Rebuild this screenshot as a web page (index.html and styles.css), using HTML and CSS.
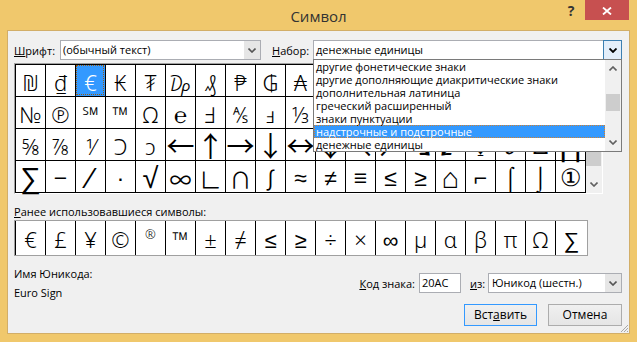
FILE: index.html
```html
<!DOCTYPE html>
<html lang="ru">
<head>
<meta charset="utf-8">
<title>Символ</title>
<link rel="stylesheet" href="styles.css">
</head>
<body>
<div class="window">
  <div class="titlebar">
    <div class="tb-spacer"></div>
    <div class="title">Символ</div>
    <div class="controls">
      <span class="help">?</span>
      <span class="close"><svg width="10" height="8" viewBox="0 0 10 8"><path d="M1 0.5 L9 7.5 M9 0.5 L1 7.5" stroke="#fff" stroke-width="1.8" fill="none"/></svg></span>
    </div>
  </div>
  <div class="client">
    <div class="font-row">
      <span class="lbl lbl-font"><u>Ш</u>рифт:</span>
      <div class="combo combo-font">
        <span class="value">(обычный текст)</span>
        <span class="btn"><svg width="8" height="5" viewBox="0 0 8 5"><path d="M0.5 0.5 L4 4 L7.5 0.5" stroke="#555" stroke-width="1.6" fill="none"/></svg></span>
      </div>
      <span class="lbl lbl-set"><u>Н</u>абор:</span>
      <div class="combo combo-set">
        <span class="value">денежные единицы</span>
        <span class="btn btn-active"><svg width="8" height="5" viewBox="0 0 8 5"><path d="M0.5 0.5 L4 4 L7.5 0.5" stroke="#000" stroke-width="1.8" fill="none"/></svg></span>
        <div class="droplist">
          <ul class="items">
            <li>другие фонетические знаки</li>
            <li>другие дополняющие диакритические знаки</li>
            <li>дополнительная латиница</li>
            <li>греческий расширенный</li>
            <li>знаки пунктуации</li>
            <li class="sel">надстрочные и подстрочные</li>
            <li>денежные единицы</li>
          </ul>
          <div class="vscroll list-scroll">
            <span class="sb-btn"><svg width="8" height="5" viewBox="0 0 8 5"><path d="M0.5 4.5 L4 1 L7.5 4.5" stroke="#606060" stroke-width="1.6" fill="none"/></svg></span>
            <div class="track"><div class="thumb thumb-list"></div></div>
            <span class="sb-btn"><svg width="8" height="5" viewBox="0 0 8 5"><path d="M0.5 0.5 L4 4 L7.5 0.5" stroke="#606060" stroke-width="1.6" fill="none"/></svg></span>
          </div>
        </div>
      </div>
    </div>

    <div class="grid-wrap">
      <div class="cells">
        <span class="cell">₪</span><span class="cell">₫</span><span class="cell sel">€</span><span class="cell">₭</span><span class="cell">₮</span><span class="cell">₯</span><span class="cell">₰</span><span class="cell">₱</span><span class="cell">₲</span><span class="cell">₳</span><span class="cell"></span><span class="cell"></span><span class="cell"></span><span class="cell"></span><span class="cell"></span><span class="cell"></span><span class="cell"></span><span class="cell"></span><span class="cell"></span>
        <span class="cell">№</span><span class="cell">℗</span><span class="cell">℠</span><span class="cell">™</span><span class="cell">Ω</span><span class="cell">℮</span><span class="cell">Ⅎ</span><span class="cell">⅍</span><span class="cell">ⅎ</span><span class="cell">⅓</span><span class="cell"></span><span class="cell"></span><span class="cell"></span><span class="cell"></span><span class="cell"></span><span class="cell"></span><span class="cell"></span><span class="cell"></span><span class="cell"></span>
        <span class="cell">⅝</span><span class="cell">⅞</span><span class="cell">⅟</span><span class="cell">Ↄ</span><span class="cell">ↄ</span><span class="cell arr">←</span><span class="cell arr">↑</span><span class="cell arr">→</span><span class="cell arr">↓</span><span class="cell arr">↔</span><span class="cell arr">↕</span><span class="cell arr">↖</span><span class="cell arr">↗</span><span class="cell arr">↘</span><span class="cell arr">↙</span><span class="cell wgl">↨</span><span class="cell wgl">∂</span><span class="cell wgl">∆</span><span class="cell lg">∏</span>
        <span class="cell lg">∑</span><span class="cell wgl">−</span><span class="cell lg">∕</span><span class="cell wgl">∙</span><span class="cell lg">√</span><span class="cell cjk">∞</span><span class="cell cjk">∟</span><span class="cell cjk">∩</span><span class="cell cjk">∫</span><span class="cell wgl">≈</span><span class="cell wgl">≠</span><span class="cell wgl">≡</span><span class="cell wgl">≤</span><span class="cell wgl">≥</span><span class="cell lg">⌂</span><span class="cell wgl">⌐</span><span class="cell wgl">⌠</span><span class="cell wgl">⌡</span><span class="cell big">①</span>
      </div>
      <div class="vscroll grid-scroll">
        <span class="sb-btn"><svg width="8" height="5" viewBox="0 0 8 5"><path d="M0.5 4.5 L4 1 L7.5 4.5" stroke="#606060" stroke-width="1.6" fill="none"/></svg></span>
        <div class="track"><div class="thumb thumb-grid"></div></div>
        <span class="sb-btn"><svg width="8" height="5" viewBox="0 0 8 5"><path d="M0.5 0.5 L4 4 L7.5 0.5" stroke="#606060" stroke-width="1.6" fill="none"/></svg></span>
      </div>
    </div>

    <div class="recent-label"><u>Р</u>анее использовавшиеся символы:</div>
    <div class="recent">
      <span class="rcell">€</span><span class="rcell">£</span><span class="rcell">¥</span><span class="rcell">©</span><span class="rcell sup">®</span><span class="rcell">™</span><span class="rcell">±</span><span class="rcell">≠</span><span class="rcell">≤</span><span class="rcell">≥</span><span class="rcell">÷</span><span class="rcell">×</span><span class="rcell">∞</span><span class="rcell">µ</span><span class="rcell">α</span><span class="rcell">β</span><span class="rcell">π</span><span class="rcell">Ω</span><span class="rcell">∑</span>
    </div>

    <div class="bottom">
      <div class="names">
        <div class="uname-lbl">Имя Юникода:</div>
        <div class="uname">Euro Sign</div>
      </div>
      <div class="actions">
        <div class="code-row">
          <span class="lbl lbl-code"><u>К</u>од знака:</span>
          <span class="input">20AC</span>
          <span class="lbl lbl-from"><u>и</u>з:</span>
          <div class="combo combo-from">
            <span class="value">Юникод (шестн.)</span>
            <span class="btn"><svg width="8" height="5" viewBox="0 0 8 5"><path d="M0.5 0.5 L4 4 L7.5 0.5" stroke="#555" stroke-width="1.6" fill="none"/></svg></span>
          </div>
        </div>
        <div class="buttons">
          <span class="button default">Вст<u>а</u>вить</span>
          <span class="button">Отмена</span>
        </div>
      </div>
    </div>
    <svg class="grip" width="9" height="9" viewBox="0 0 9 9"><path d="M8 1 L1 8 M8 4 L4 8 M8 7 L7 8" stroke="#a8a8a8" stroke-width="1" fill="none"/></svg>
  </div>
</div>
</body>
</html>
```

FILE: styles.css
```css
html, body {
  margin: 0;
  padding: 0;
}
body {
  width: 637px;
  height: 342px;
  overflow: hidden;
  font-family: "Segoe UI", "Open Sans", "Noto Sans", sans-serif;
  font-size: 11px;
  color: #000;
}
u { text-decoration: underline; text-underline-offset: 1px; }

.window {
  width: 637px;
  height: 342px;
  box-sizing: border-box;
  background: #f0c86c;
  padding: 0 7px 8px 7px;
  display: flex;
  flex-direction: column;
}

.titlebar {
  height: 30px;
  flex: none;
  display: grid;
  grid-template-columns: 1fr auto 1fr;
}
.title {
  font-size: 15px;
  line-height: 32px;
  color: #333;
}
.controls {
  justify-self: end;
  display: flex;
  align-items: flex-start;
  margin-right: 1px;
}
.help {
  width: 28px;
  height: 20px;
  text-align: center;
  font-weight: bold;
  font-size: 14px;
  line-height: 22px;
  color: #333;
}
.close {
  width: 44px;
  height: 20px;
  background: #c75050;
  display: flex;
  align-items: center;
  justify-content: center;
  padding-top: 2px;
  box-sizing: border-box;
}

.client {
  flex: 1;
  background: #f0f0f0;
  border: 1px solid #d2ae68;
  position: relative;
}

/* top row */
.font-row {
  display: flex;
  align-items: center;
  height: 20px;
  margin: 9px 0 0 6px;
}
.lbl-font { width: 46px; }
.lbl-set { width: 41px; margin-left: 11px; }

.combo {
  height: 20px;
  box-sizing: border-box;
  border: 1px solid #abadb3;
  background: #fff;
  display: flex;
  position: relative;
}
.combo .value {
  flex: 1;
  padding-left: 2px;
  line-height: 18px;
  white-space: nowrap;
}
.combo .btn {
  width: 16px;
  background: #e6e6e6;
  display: flex;
  align-items: center;
  justify-content: center;
}
.combo-font { width: 201px; }
.combo-set { width: 309px; }
.combo .btn-active {
  width: 17px;
  margin: -1px -1px -1px 0;
  border: 1px solid #3c7fb1;
  background: #e3eefa;
}

.droplist {
  position: absolute;
  top: 18px;
  left: -1px;
  right: -1px;
  height: 93px;
  box-sizing: border-box;
  border: 1px solid #7a7a7a;
  background: #fff;
  display: flex;
  z-index: 5;
}
.items {
  list-style: none;
  margin: 0;
  padding: 0;
  flex: 1;
}
.items li {
  height: 13px;
  line-height: 13px;
  padding-left: 2px;
  white-space: nowrap;
  box-sizing: border-box;
}
.items li.sel {
  background: #3399ff;
  color: #fff;
  outline: 1px dotted #d08030;
  outline-offset: -1px;
}

.vscroll {
  width: 16px;
  background: #f0f0f0;
  display: flex;
  flex-direction: column;
}
.sb-btn {
  height: 17px;
  display: flex;
  align-items: center;
  justify-content: center;
  flex: none;
}
.track { flex: 1; }
.thumb { background: #cdcdcd; margin: 0 1px; }
.thumb-list { margin-top: 17px; height: 17px; }
.thumb-grid { margin-top: 71px; height: 14px; margin-left: 0; }

/* symbol grid */
.grid-wrap {
  margin: 3px 0 0 6px;
  display: flex;
  width: max-content;
  border-style: solid;
  border-width: 1px;
  border-color: #a0a0a0 #ffffff #ffffff #a0a0a0;
}
.cells {
  display: grid;
  grid-template-columns: repeat(19, 30px);
  grid-auto-rows: 32px;
  border-right: 1px solid #000;
  border-bottom: 1px solid #000;
  background: #fff;
}
.cell {
  box-sizing: border-box;
  border-left: 1px solid #000;
  border-top: 1px solid #000;
  display: flex;
  align-items: center;
  justify-content: center;
  font-family: "Noto Sans", "DejaVu Sans", sans-serif;
  font-weight: 300;
  font-size: 22px;
  line-height: 24px;
  padding-top: 3px;
}
.cell.wgl {
  font-family: "Liberation Sans", "DejaVu Sans", sans-serif;
  font-size: 23px;
  font-weight: normal;
}
.cell.lg {
  font-family: "Liberation Sans", "DejaVu Sans", sans-serif;
  font-size: 29px;
  line-height: 26px;
  font-weight: normal;
  padding-top: 2px;
}
.cell.cjk {
  font-family: "Noto Sans CJK JP", "DejaVu Sans", sans-serif;
  font-size: 22px;
  line-height: 26px;
  font-weight: normal;
  padding-top: 2px;
}
.cell.arr {
  font-family: "Noto Sans CJK JP", "DejaVu Sans", sans-serif;
  font-size: 28px;
  line-height: 28px;
  font-weight: normal;
  padding-top: 1px;
}
.cell.big {
  font-size: 24px;
  line-height: 26px;
  padding-top: 1px;
}
.cell.sel {
  background: #3399ff;
  color: #fff;
  outline: 1px dotted #9a5a10;
  outline-offset: -2px;
}

.recent-label {
  margin: 10px 0 0 6px;
  line-height: 16px;
}
.recent {
  margin-left: 6px;
  width: 574px;
  height: 36px;
  box-sizing: border-box;
  border: 1px solid #a0a0a0;
  background: #fff;
  display: grid;
  grid-template-columns: repeat(18, 30px) 1fr;
}
.rcell {
  border-left: 1px solid #000;
  display: flex;
  align-items: center;
  justify-content: center;
  font-family: "Noto Sans", "DejaVu Sans", sans-serif;
  font-weight: 300;
  font-size: 22px;
  line-height: 1;
  padding-top: 2px;
}
.rcell.sup {
  font-size: 13px;
  align-items: flex-start;
  padding-top: 7px;
}

/* bottom */
.bottom {
  display: flex;
  margin-top: 10px;
}
.names {
  flex: 1;
  padding-left: 6px;
}
.uname-lbl { line-height: 15px; }
.uname { line-height: 15px; margin-top: 4px; }

.actions {
  margin-right: 7px;
  padding-top: 7px;
}
.code-row {
  display: flex;
  align-items: center;
  justify-content: flex-end;
  height: 20px;
}
.lbl-code { margin-right: 4px; }
.input {
  width: 42px;
  height: 20px;
  box-sizing: border-box;
  border: 1px solid #abadb3;
  background: #fff;
  padding-left: 2px;
  line-height: 18px;
}
.lbl-from { width: 18px; margin-left: 9px; }
.combo-from { width: 134px; }
.combo-from .value { padding-left: 3px; }

.buttons {
  display: flex;
  justify-content: flex-end;
  gap: 11px;
  margin-top: 11px;
}
.button {
  width: 73px;
  height: 22px;
  box-sizing: border-box;
  border: 1px solid #acacac;
  background: linear-gradient(#f0f0f0, #e5e5e5);
  text-align: center;
  line-height: 20px;
  font-size: 12px;
}
.button + .button { width: 74px; }
.button.default { border-color: #3399ff; }

.grip {
  position: absolute;
  right: 0;
  bottom: 0;
}
```
